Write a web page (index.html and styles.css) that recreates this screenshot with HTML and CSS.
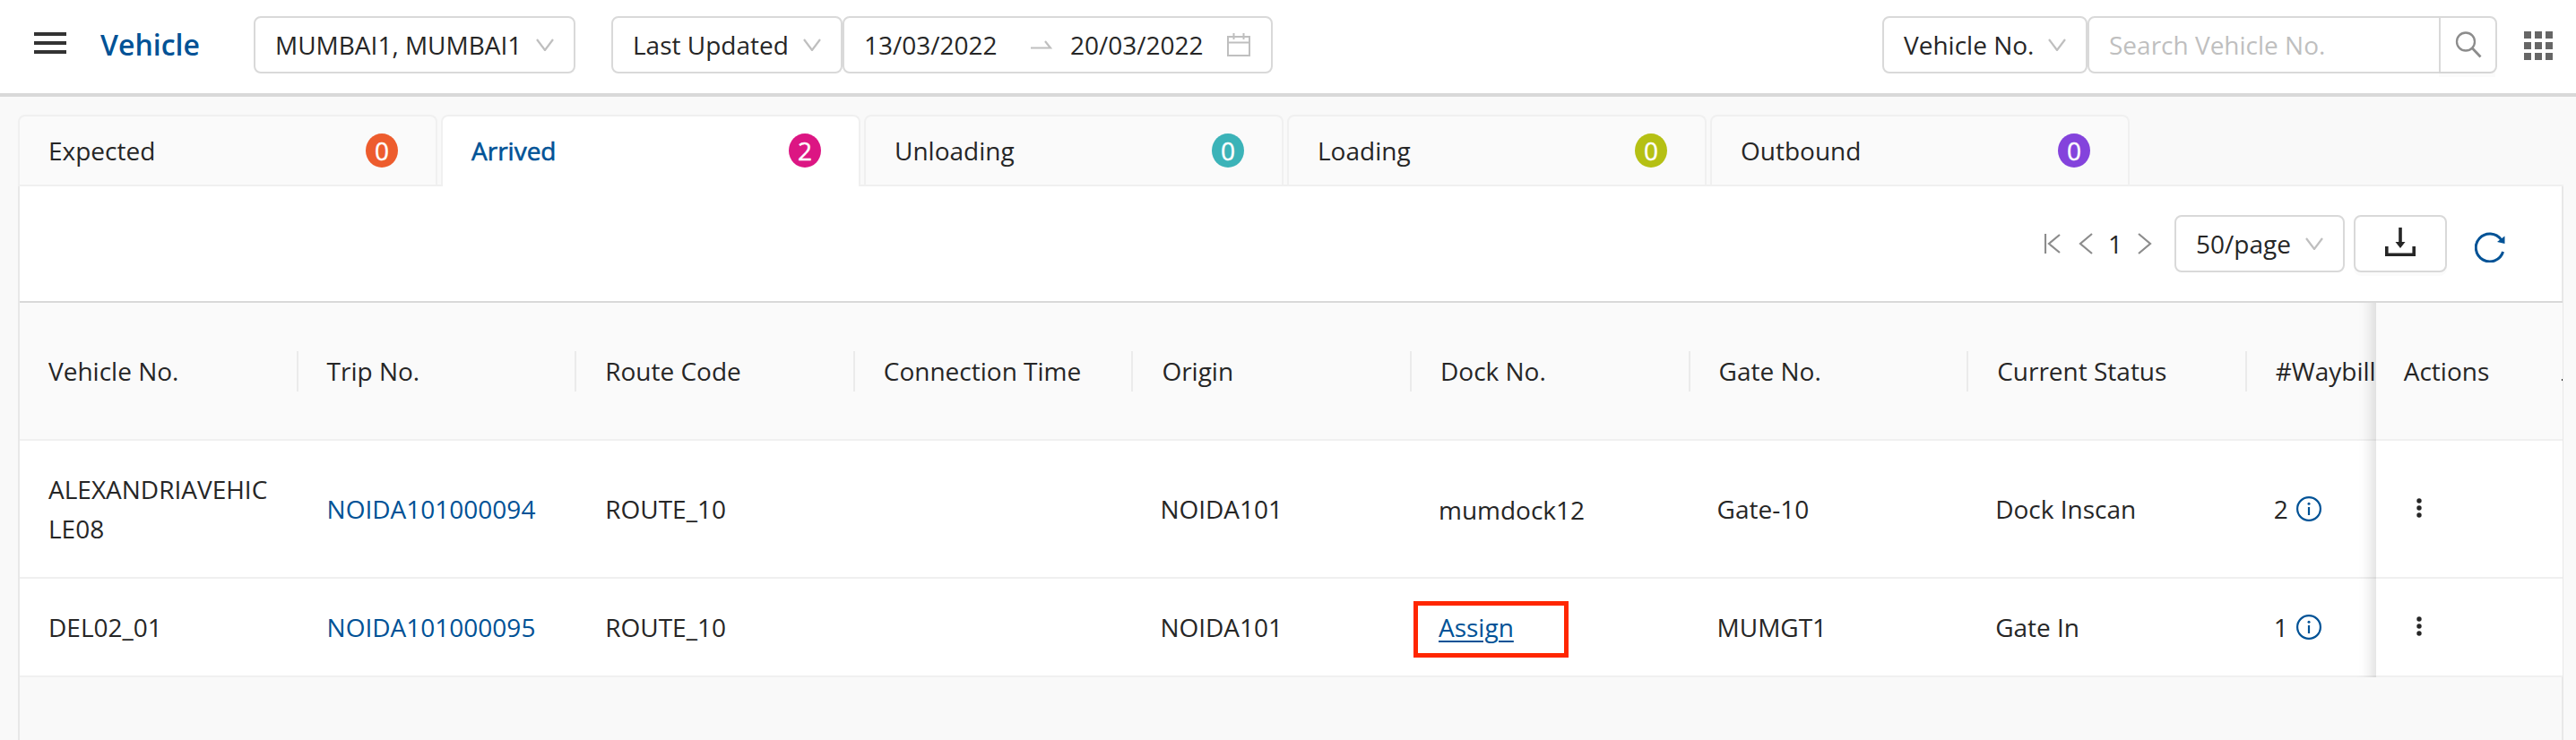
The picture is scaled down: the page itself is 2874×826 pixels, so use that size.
FILE: index.html
```html
<!DOCTYPE html>
<html lang="en">
<head>
    <meta charset="UTF-8" />
    <meta name="viewport" content="width=device-width, initial-scale=1.0"/>
    <title>Vehicle</title>
    <link rel="stylesheet" href="styles.css">
</head>
<body>
    <svg class="sprite" width="0" height="0">
        <symbol id="chevron" viewBox="0 0 20 14"><path d="M1 1l9 12 9-12" fill="none" stroke="currentColor" stroke-width="2.2"/></symbol>
        <symbol id="info" viewBox="0 0 28 28">
            <circle cx="14" cy="14" r="12.9" fill="none" stroke="currentColor" stroke-width="2.2"/>
            <path d="M14 12v9" stroke="currentColor" stroke-width="2.2"/>
            <circle cx="14" cy="8.3" r="1.5" fill="currentColor"/>
        </symbol>
        <symbol id="dots" viewBox="0 0 6 22">
            <circle cx="3" cy="3" r="2.7" fill="currentColor"/>
            <circle cx="3" cy="11" r="2.7" fill="currentColor"/>
            <circle cx="3" cy="19" r="2.7" fill="currentColor"/>
        </symbol>
    </svg>

    <header class="topbar">
        <div class="menu-icon"><span></span><span></span><span></span></div>
        <h1 class="page-title">Vehicle</h1>
        <div class="select location">MUMBAI1, MUMBAI1 <svg class="chevron"><use href="#chevron"/></svg></div>
        <div class="select date-type">Last Updated <svg class="chevron"><use href="#chevron"/></svg></div>
        <div class="select date-range">
            <span class="date">13/03/2022</span>
            <svg class="range-arrow" viewBox="0 0 24 10"><path d="M0 8.5h22L16 1" fill="none" stroke="currentColor" stroke-width="2.2"/></svg>
            <span class="date">20/03/2022</span>
            <svg class="calendar" viewBox="0 0 26 26"><path d="M1 4h24v21H1zM1 10.5h24M7.5 0v7M18.5 0v7" fill="none" stroke="currentColor" stroke-width="2"/></svg>
        </div>
        <div class="select search-type">Vehicle No. <svg class="chevron"><use href="#chevron"/></svg></div>
        <div class="search">
            <input type="text" class="search-input" placeholder="Search Vehicle No.">
            <button type="button" class="search-button">
                <svg width="30" height="30" viewBox="0 0 30 30"><circle cx="12" cy="11.5" r="10" fill="none" stroke="currentColor" stroke-width="2.3"/><path d="M19 18.5l9.500 10" stroke="currentColor" stroke-width="2.8"/></svg>
            </button>
        </div>
        <div class="apps-icon">
            <i></i><i></i><i></i><i></i><i></i><i></i><i></i><i></i><i></i>
        </div>
    </header>

    <nav class="tabs">
        <a class="tab">Expected <span class="count orange">0</span></a>
        <a class="tab active">Arrived <span class="count pink">2</span></a>
        <a class="tab">Unloading <span class="count teal">0</span></a>
        <a class="tab">Loading <span class="count lime">0</span></a>
        <a class="tab">Outbound <span class="count purple">0</span></a>
    </nav>

    <main class="panel">
        <div class="toolbar">
            <div class="pager">
                <svg width="18" height="22" viewBox="0 0 18 22"><path d="M1 0v22M17 1L5 11l12 10" fill="none" stroke="currentColor" stroke-width="2.2"/></svg>
                <svg width="16" height="24" viewBox="0 0 16 24"><path d="M15 1L2 12l13 11" fill="none" stroke="currentColor" stroke-width="2.2"/></svg>
                <span class="page-number">1</span>
                <svg width="16" height="24" viewBox="0 0 16 24"><path d="M1 1l13 11L1 23" fill="none" stroke="currentColor" stroke-width="2.2"/></svg>
            </div>
            <div class="select page-size">50/page <svg class="chevron"><use href="#chevron"/></svg></div>
            <button type="button" class="download-button">
                <svg width="34" height="32" viewBox="0 0 34 32"><path d="M1.800 21v9.200h30.400V21M17 0v18" fill="none" stroke="currentColor" stroke-width="3.6"/><path d="M11.500 16h11L17 23z" fill="currentColor"/></svg>
            </button>
            <svg class="refresh" width="34" height="34" viewBox="0 0 34 34"><path d="M31.600 22A15.500 15.500 0 1 1 29.500 8.500" fill="none" stroke="currentColor" stroke-width="3"/><path d="M33.500 4.500v8.500l-8.500-2z" fill="currentColor"/></svg>
        </div>

        <table class="vehicle-table">
            <thead>
                <tr>
                    <th>Vehicle No.</th>
                    <th>Trip No.</th>
                    <th>Route Code</th>
                    <th>Connection Time</th>
                    <th>Origin</th>
                    <th>Dock No.</th>
                    <th>Gate No.</th>
                    <th>Current Status</th>
                    <th class="waybill">#Waybill</th>
                    <th class="actions">Actions</th>
                </tr>
            </thead>
            <tbody>
                <tr class="tall">
                    <td>ALEXANDRIAVEHICLE08</td>
                    <td><a class="link">NOIDA101000094</a></td>
                    <td>ROUTE_10</td>
                    <td></td>
                    <td>NOIDA101</td>
                    <td class="dock">mumdock12</td>
                    <td>Gate-10</td>
                    <td>Dock Inscan</td>
                    <td class="waybill"><div class="waybill-count">2 <svg class="info"><use href="#info"/></svg></div></td>
                    <td class="actions"><svg class="dots"><use href="#dots"/></svg></td>
                </tr>
                <tr>
                    <td>DEL02_01</td>
                    <td><a class="link">NOIDA101000095</a></td>
                    <td>ROUTE_10</td>
                    <td></td>
                    <td>NOIDA101</td>
                    <td class="assign-cell"><a class="assign">Assign</a></td>
                    <td>MUMGT1</td>
                    <td>Gate In</td>
                    <td class="waybill"><div class="waybill-count">1 <svg class="info"><use href="#info"/></svg></div></td>
                    <td class="actions"><svg class="dots"><use href="#dots"/></svg></td>
                </tr>
            </tbody>
        </table>
    </main>
</body>
</html>
```

FILE: styles.css
```css
*,
*::before,
*::after {
    box-sizing: border-box;
}

body {
    margin: 0;
    height: 826px;
    overflow: hidden;
    display: flex;
    flex-direction: column;
    background-color: #f9f9f9;
    color: #262626;
    font-family: "Open Sans", "Noto Sans", sans-serif;
    font-size: 28px;
    line-height: 44px;
}

svg {
    display: block;
    flex-shrink: 0;
}

.sprite {
    position: absolute;
}

/* top bar */
.topbar {
    display: flex;
    align-items: center;
    flex-shrink: 0;
    height: 108px;
    padding: 0 26px 4px 38px;
    background-color: #fff;
    border-bottom: 4px solid #d9d9d9;
}

.menu-icon {
    display: flex;
    flex-direction: column;
    gap: 6px;
    width: 36px;
    margin-right: 38px;
    margin-bottom: 4px;
}

.menu-icon span {
    height: 4px;
    background-color: #333;
}

.page-title {
    width: 171px;
    margin: 0;
    font-size: 32px;
    font-weight: 600;
    color: #005296;
}

.select {
    display: flex;
    align-items: center;
    justify-content: space-between;
    height: 64px;
    padding: 0 22px;
    border: 2px solid #d9d9d9;
    border-radius: 8px;
    background-color: #fff;
    white-space: nowrap;
}

.chevron {
    width: 20px;
    height: 14px;
    color: #bfbfbf;
}

.location {
    width: 359px;
    margin-right: 40px;
}

.date-type {
    width: 258px;
}

.date-range {
    width: 480px;
    justify-content: flex-start;
}

.date {
    width: 149px;
}

.range-arrow {
    width: 24px;
    height: 10px;
    margin: 0 20px 0 37px;
    color: #bfbfbf;
}

.calendar {
    width: 26px;
    height: 26px;
    margin-left: 26px;
    color: #bfbfbf;
}

.search-type {
    width: 229px;
    margin-left: auto;
}

.search {
    display: flex;
    width: 457px;
    height: 64px;
    border: 2px solid #d9d9d9;
    border-radius: 8px;
    margin-right: 30px;
}

.search-input {
    flex: 1;
    min-width: 0;
    padding: 0 22px;
    border: none;
    background: none;
    font: inherit;
}

.search-input::placeholder {
    color: #bfbfbf;
    opacity: 1;
}

.search-button {
    display: flex;
    align-items: center;
    justify-content: center;
    width: 63px;
    padding: 0;
    border: none;
    border-left: 2px solid #d9d9d9;
    background: none;
    color: #8c8c8c;
    box-shadow: 0 6px 0 rgba(0, 0, 0, 0.016);
}

.apps-icon {
    display: grid;
    grid-template-columns: repeat(3, 8px);
    gap: 4px;
    margin-top: 2px;
}

.apps-icon i {
    height: 8px;
    background-color: #666;
}

/* tabs */
.tabs {
    display: flex;
    gap: 4px;
    flex-shrink: 0;
    height: 80px;
    margin: 20px 14px 0 20px;
    border-bottom: 2px solid #f0f0f0;
}

.tab {
    display: flex;
    align-items: center;
    justify-content: space-between;
    width: 468px;
    height: 78px;
    padding: 0 42px 0 32px;
    border: 2px solid #f0f0f0;
    border-bottom: none;
    border-radius: 8px 8px 0 0;
    background-color: #fafafa;
}

.tab.active {
    height: 80px;
    padding-bottom: 2px;
    background-color: #fff;
    color: #005296;
    -webkit-text-stroke: 0.6px currentColor;
}

.count {
    width: 36px;
    height: 38px;
    border-radius: 50%;
    color: #fff;
    line-height: 38px;
    text-align: center;
    -webkit-text-stroke: 0.4px #fff;
}

.orange { background-color: #ed5c2d; }
.pink { background-color: #dc1683; }
.teal { background-color: #3bb3b8; }
.lime { background-color: #b5c014; }
.purple { background-color: #8443dc; }

/* list panel */
.panel {
    flex: 1;
    width: 2840px;
    margin-left: 20px;
    border: 2px solid #e8e8e8;
    border-top: none;
    border-bottom: none;
}

.toolbar {
    display: flex;
    align-items: center;
    justify-content: flex-end;
    height: 128px;
    padding: 0 63px 0 0;
    background-color: #fff;
}

.pager {
    display: flex;
    align-items: center;
    margin-right: 25px;
    color: #8c8c8c;
}

.pager svg:first-child {
    margin-right: 20px;
}

.page-number {
    width: 16px;
    margin: 0 17px;
    color: #262626;
}

.page-size {
    width: 190px;
    margin-right: 10px;
}

.download-button {
    display: flex;
    align-items: center;
    justify-content: center;
    width: 104px;
    height: 64px;
    margin-right: 31px;
    padding: 0 0 4px;
    border: 2px solid #d9d9d9;
    border-radius: 8px;
    background-color: #fff;
    color: #262626;
    box-shadow: 0 4px 0 rgba(0, 0, 0, 0.016);
}

.refresh {
    margin-top: 8px;
    color: #005296;
}

/* table */
.vehicle-table {
    width: 2836px;
    table-layout: fixed;
    border-collapse: separate;
    border-spacing: 0;
    border-top: 2px solid #d9d9d9;
}

th,
td {
    position: relative;
    width: 310.6px;
    padding: 0 30px 0 32px;
    border-bottom: 2px solid #f0f0f0;
    text-align: left;
    font-weight: 400;
}

th {
    height: 154px;
    background-color: #fafafa;
    white-space: nowrap;
}

td {
    height: 110px;
    background-color: #fff;
    word-break: break-all;
}

td:nth-child(n+5) {
    padding-left: 30px;
}

.tall td {
    height: 154px;
}

.tall .dock {
    padding-top: 2px;
}

th:not(.waybill):not(.actions)::after {
    content: "";
    position: absolute;
    top: 54px;
    right: 0;
    width: 2px;
    height: 45px;
    background-color: #ebebeb;
}

.link,
.assign {
    color: #005296;
}

.assign {
    text-decoration: underline;
    text-underline-offset: 4px;
    text-decoration-thickness: 2px;
}

/* highlight frame over the dock cell */
.assign-cell::after {
    content: "";
    position: absolute;
    top: 25px;
    left: 2px;
    width: 173px;
    height: 63px;
    border: 5px solid #ff2600;
}

.waybill {
    width: 144px;
    padding-right: 0;
    overflow: hidden;
}

.waybill-count {
    display: flex;
    align-items: center;
    gap: 9px;
}

.info {
    width: 28px;
    height: 28px;
    color: #005296;
}

.actions {
    width: 208px;
}

th.actions {
    padding-left: 31px;
}

.actions::before {
    content: "";
    position: absolute;
    top: 0;
    bottom: -2px;
    left: -60px;
    width: 60px;
    box-shadow: inset -20px 0 16px -16px rgba(0, 0, 0, 0.15);
}

th.actions::after {
    content: "";
    position: absolute;
    top: 85px;
    right: 0;
    width: 1px;
    height: 2px;
    background-color: #262626;
}

.dots {
    width: 6px;
    height: 22px;
    margin: -2px 0 0 15px;
}
```
